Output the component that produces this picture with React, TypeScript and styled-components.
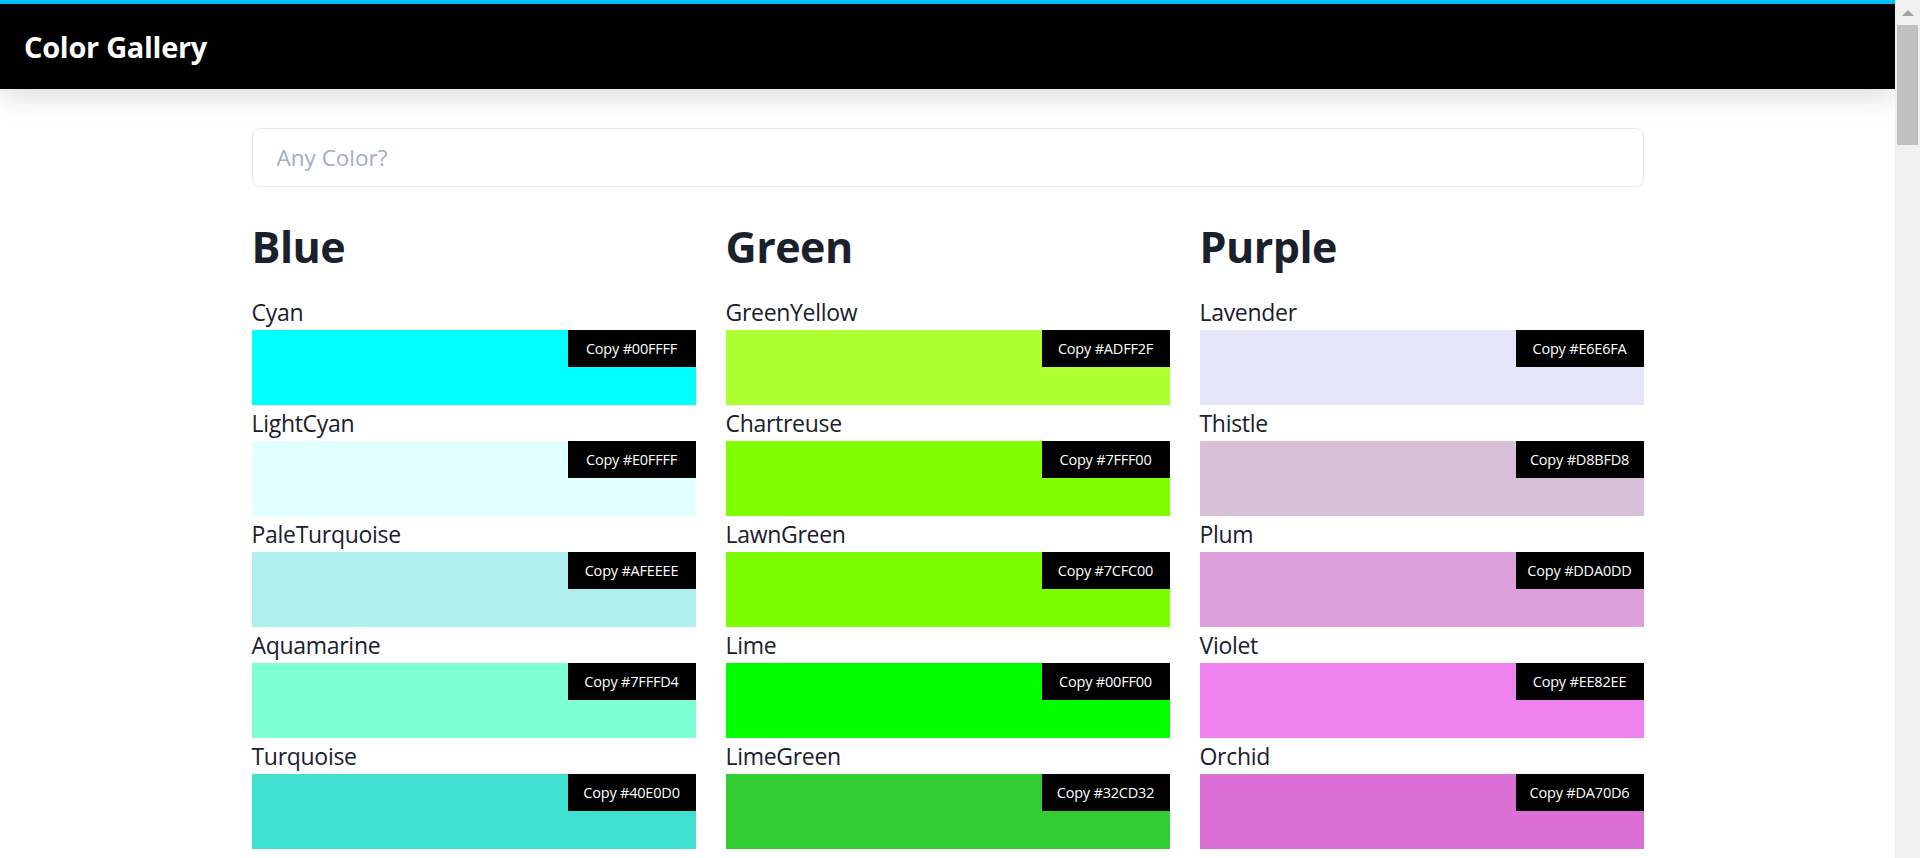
import React, { useState } from 'react';
import styled, { createGlobalStyle } from 'styled-components';

type Swatch = { name: string; hex: string };
type Group = { title: string; colors: Swatch[] };

const groups: Group[] = [
  {
    title: 'Blue',
    colors: [
      { name: 'Cyan', hex: '#00FFFF' },
      { name: 'LightCyan', hex: '#E0FFFF' },
      { name: 'PaleTurquoise', hex: '#AFEEEE' },
      { name: 'Aquamarine', hex: '#7FFFD4' },
      { name: 'Turquoise', hex: '#40E0D0' },
      { name: 'MediumTurquoise', hex: '#48D1CC' },
      { name: 'DarkTurquoise', hex: '#00CED1' },
      { name: 'CadetBlue', hex: '#5F9EA0' },
      { name: 'SteelBlue', hex: '#4682B4' },
      { name: 'LightSteelBlue', hex: '#B0C4DE' },
      { name: 'PowderBlue', hex: '#B0E0E6' },
      { name: 'LightBlue', hex: '#ADD8E6' },
      { name: 'SkyBlue', hex: '#87CEEB' },
      { name: 'LightSkyBlue', hex: '#87CEFA' },
      { name: 'DeepSkyBlue', hex: '#00BFFF' },
      { name: 'DodgerBlue', hex: '#1E90FF' },
      { name: 'CornflowerBlue', hex: '#6495ED' },
      { name: 'RoyalBlue', hex: '#4169E1' },
      { name: 'Blue', hex: '#0000FF' },
      { name: 'MediumBlue', hex: '#0000CD' },
      { name: 'DarkBlue', hex: '#00008B' },
      { name: 'Navy', hex: '#000080' },
      { name: 'MidnightBlue', hex: '#191970' },
    ],
  },
  {
    title: 'Green',
    colors: [
      { name: 'GreenYellow', hex: '#ADFF2F' },
      { name: 'Chartreuse', hex: '#7FFF00' },
      { name: 'LawnGreen', hex: '#7CFC00' },
      { name: 'Lime', hex: '#00FF00' },
      { name: 'LimeGreen', hex: '#32CD32' },
      { name: 'PaleGreen', hex: '#98FB98' },
      { name: 'LightGreen', hex: '#90EE90' },
      { name: 'MediumSpringGreen', hex: '#00FA9A' },
      { name: 'SpringGreen', hex: '#00FF7F' },
      { name: 'MediumSeaGreen', hex: '#3CB371' },
      { name: 'SeaGreen', hex: '#2E8B57' },
      { name: 'ForestGreen', hex: '#228B22' },
      { name: 'Green', hex: '#008000' },
      { name: 'DarkGreen', hex: '#006400' },
      { name: 'YellowGreen', hex: '#9ACD32' },
      { name: 'OliveDrab', hex: '#6B8E23' },
      { name: 'Olive', hex: '#808000' },
      { name: 'DarkOliveGreen', hex: '#556B2F' },
      { name: 'MediumAquamarine', hex: '#66CDAA' },
      { name: 'DarkSeaGreen', hex: '#8FBC8F' },
      { name: 'LightSeaGreen', hex: '#20B2AA' },
      { name: 'DarkCyan', hex: '#008B8B' },
      { name: 'Teal', hex: '#008080' },
    ],
  },
  {
    title: 'Purple',
    colors: [
      { name: 'Lavender', hex: '#E6E6FA' },
      { name: 'Thistle', hex: '#D8BFD8' },
      { name: 'Plum', hex: '#DDA0DD' },
      { name: 'Violet', hex: '#EE82EE' },
      { name: 'Orchid', hex: '#DA70D6' },
      { name: 'Fuchsia', hex: '#FF00FF' },
      { name: 'Magenta', hex: '#FF00FF' },
      { name: 'MediumOrchid', hex: '#BA55D3' },
      { name: 'MediumPurple', hex: '#9370DB' },
      { name: 'BlueViolet', hex: '#8A2BE2' },
      { name: 'DarkViolet', hex: '#9400D3' },
      { name: 'DarkOrchid', hex: '#9932CC' },
      { name: 'DarkMagenta', hex: '#8B008B' },
      { name: 'Purple', hex: '#800080' },
      { name: 'RebeccaPurple', hex: '#663399' },
      { name: 'Indigo', hex: '#4B0082' },
      { name: 'MediumSlateBlue', hex: '#7B68EE' },
      { name: 'SlateBlue', hex: '#6A5ACD' },
      { name: 'DarkSlateBlue', hex: '#483D8B' },
    ],
  },
  {
    title: 'Red',
    colors: [
      { name: 'IndianRed', hex: '#CD5C5C' },
      { name: 'LightCoral', hex: '#F08080' },
      { name: 'Salmon', hex: '#FA8072' },
      { name: 'DarkSalmon', hex: '#E9967A' },
      { name: 'LightSalmon', hex: '#FFA07A' },
      { name: 'Crimson', hex: '#DC143C' },
      { name: 'Red', hex: '#FF0000' },
      { name: 'FireBrick', hex: '#B22222' },
      { name: 'DarkRed', hex: '#8B0000' },
    ],
  },
  {
    title: 'Pink',
    colors: [
      { name: 'Pink', hex: '#FFC0CB' },
      { name: 'LightPink', hex: '#FFB6C1' },
      { name: 'HotPink', hex: '#FF69B4' },
      { name: 'DeepPink', hex: '#FF1493' },
      { name: 'MediumVioletRed', hex: '#C71585' },
      { name: 'PaleVioletRed', hex: '#DB7093' },
    ],
  },
  {
    title: 'Orange',
    colors: [
      { name: 'Coral', hex: '#FF7F50' },
      { name: 'Tomato', hex: '#FF6347' },
      { name: 'OrangeRed', hex: '#FF4500' },
      { name: 'DarkOrange', hex: '#FF8C00' },
      { name: 'Orange', hex: '#FFA500' },
    ],
  },
];

const GlobalStyle = createGlobalStyle`
  body {
    margin: 0;
    overflow: hidden;
    background: #ffffff;
    font-family: "Open Sans", "Noto Sans", sans-serif;
    color: #1a202c;
  }
`;

// page + scroll rail side by side, like the browser window in the shot
const Window = styled.div`
  display: flex;
  height: 100vh;
`;

const Page = styled.div`
  flex: 1;
  min-width: 0;
  overflow: hidden;
`;

const Rail = styled.div`
  display: flex;
  flex-direction: column;
  align-items: center;
  flex: 0 0 25px;
  background: #f0f0f0;
`;

const RailArrow = styled.div`
  flex: 0 0 25px;
  display: flex;
  align-items: center;
  justify-content: center;
  &::before {
    content: '';
    border-left: 6px solid transparent;
    border-right: 6px solid transparent;
    border-bottom: 6px solid #a3a3a3;
  }
`;

const RailThumb = styled.div`
  width: 21px;
  height: 120px;
  background: #c0c0c0;
`;

const Header = styled.header`
  display: flex;
  align-items: center;
  height: 85px;
  padding: 0 24px;
  background: #000000;
  border-top: 4px solid #00bfff;
  box-shadow: 0 10px 25px rgba(0, 0, 0, 0.12);
`;

const Brand = styled.h1`
  margin: 0;
  color: #ffffff;
  font-size: 29px;
  font-weight: 700;
  letter-spacing: -0.3px;
`;

const Main = styled.main`
  width: 1392px;
  margin: 0 auto;
  padding: 39px 0 40px;
`;

const Search = styled.input`
  box-sizing: border-box;
  display: block;
  width: 100%;
  height: 59px;
  padding: 0 24px;
  border: 1px solid #e2e8f0;
  border-radius: 8px;
  font-family: inherit;
  font-size: 22.5px;
  color: #1a202c;
  outline: none;
  &::placeholder {
    color: #a0aec0;
  }
`;

const Grid = styled.div`
  display: grid;
  grid-template-columns: repeat(3, 444px);
  column-gap: 30px;
  row-gap: 40px;
  margin-top: 33px;
`;

const Section = styled.section`
  display: flex;
  flex-direction: column;
`;

const Heading = styled.h2`
  margin: 0 0 20px;
  font-size: 43px;
  line-height: 54px;
  font-weight: 700;
  letter-spacing: -0.5px;
  color: #1a202c;
`;

const Label = styled.div`
  font-size: 23px;
  line-height: 36px;
  letter-spacing: -0.3px;
  color: #1a202c;
`;

const Chip = styled.div<{ $color: string }>`
  display: flex;
  justify-content: flex-end;
  align-items: flex-start;
  height: 75px;
  background: ${(p) => p.$color};
`;

const CopyButton = styled.button`
  width: 128px;
  height: 37px;
  padding: 0;
  border: 0;
  border-radius: 0;
  background: #000000;
  color: #ffffff;
  font-family: inherit;
  font-size: 14.5px;
  letter-spacing: -0.2px;
  cursor: pointer;
`;

const ColorItem = ({ color }: { color: Swatch }) => (
  <div>
    <Label>{color.name}</Label>
    <Chip $color={color.hex}>
      <CopyButton onClick={() => navigator.clipboard?.writeText(color.hex)}>
        Copy {color.hex}
      </CopyButton>
    </Chip>
  </div>
);

export default function App() {
  const [query, setQuery] = useState('');
  const q = query.trim().toLowerCase();

  return (
    <Window>
      <GlobalStyle />
      <Page>
        <Header>
          <Brand>Color Gallery</Brand>
        </Header>
        <Main>
          <Search
            placeholder="Any Color?"
            value={query}
            onChange={(e) => setQuery(e.target.value)}
          />
          <Grid>
            {groups.map((group) => (
              <Section key={group.title}>
                <Heading>{group.title}</Heading>
                {group.colors
                  .filter((c) => !q || c.name.toLowerCase().includes(q))
                  .map((c) => (
                    <ColorItem key={c.name} color={c} />
                  ))}
              </Section>
            ))}
          </Grid>
        </Main>
      </Page>
      <Rail>
        <RailArrow />
        <RailThumb />
      </Rail>
    </Window>
  );
}
